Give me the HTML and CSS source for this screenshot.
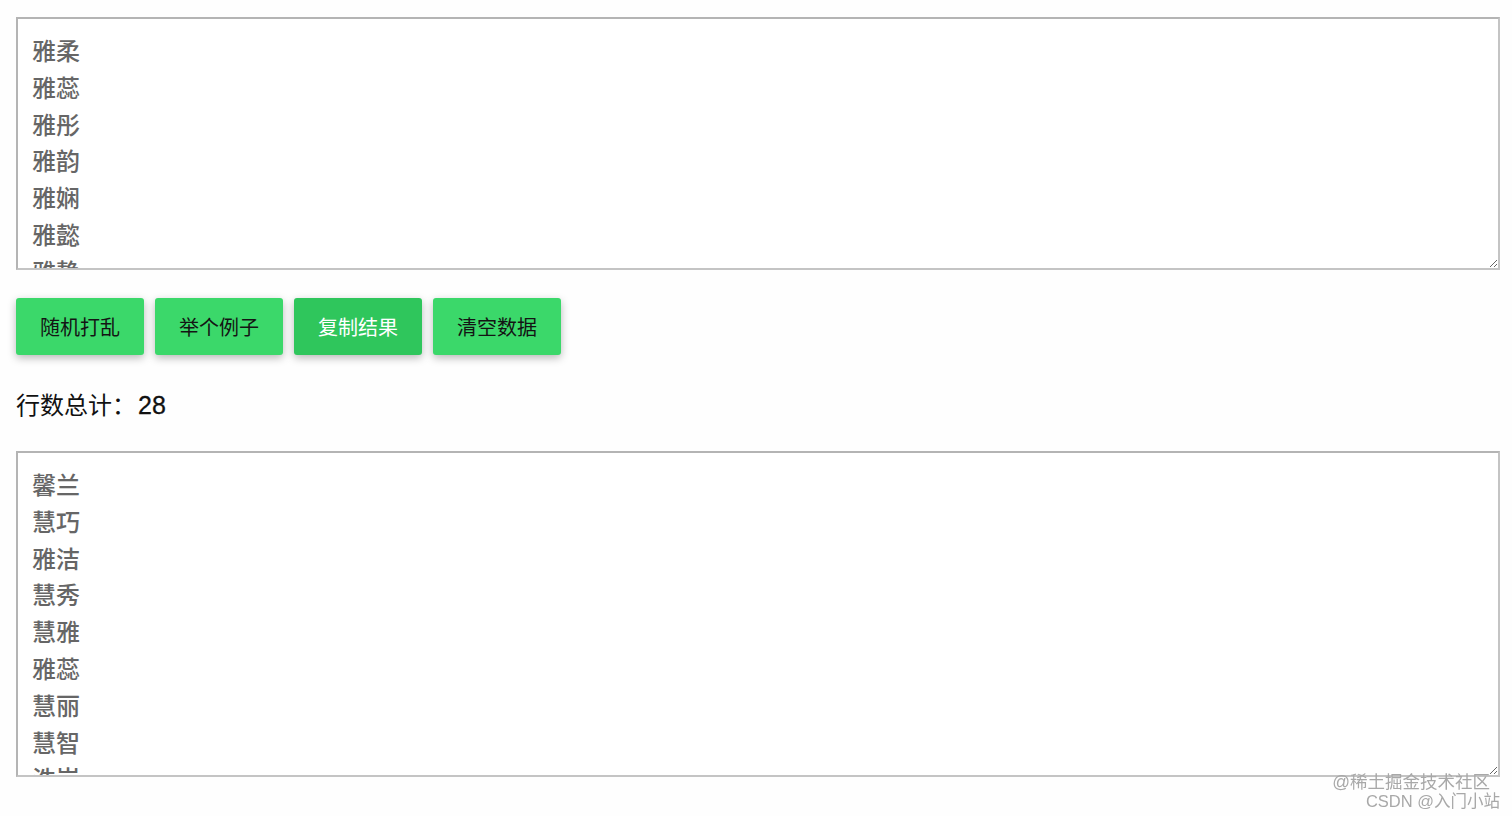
FILE: index.html
```html
<!DOCTYPE html>
<html lang="zh-CN">
<head>
<meta charset="utf-8">
<title>随机打乱</title>
<link rel="stylesheet" href="styles.css">
</head>
<body>
<main class="page">
<textarea class="box box-top">雅柔
雅蕊
雅彤
雅韵
雅娴
雅懿
雅静
雅洁
雅丽
雅琴
雅惠
雅容
雅琪
雅芙</textarea>
<div class="actions">
<button class="btn">随机打乱</button>
<button class="btn">举个例子</button>
<button class="btn btn-active">复制结果</button>
<button class="btn">清空数据</button>
</div>
<p class="count">行数总计：<span class="num">28</span></p>
<textarea class="box box-bottom">馨兰
慧巧
雅洁
慧秀
慧雅
雅蕊
慧丽
慧智
浩岚
雅琴
慧心
雅静
慧颖
雅惠</textarea>
</main>
<div class="watermark">
<span class="wm-line">@稀土掘金技术社区</span>
<span class="wm-line wm-second">CSDN @入门小站</span>
</div>
</body>
</html>
```

FILE: styles.css
```css
html, body {
  margin: 0;
  padding: 0;
  background: #fefefe;
}
body {
  font-family: "Liberation Sans", "Noto Sans CJK SC", sans-serif;
  width: 1512px;
  height: 816px;
  position: relative;
  overflow: hidden;
}
.page {
  display: flex;
  flex-direction: column;
  padding: 17px 12px 0 16px;
}
.box {
  display: block;
  box-sizing: border-box;
  width: 1484px;
  margin: 0;
  border: 2px solid #c4c4c4;
  border-top-color: #b4b4b4;
  border-left-color: #b4b4b4;
  background: #fff;
  padding: 13px 14px;
  font-family: "Noto Sans CJK SC", sans-serif;
  font-size: 24px;
  font-weight: 500;
  line-height: 36.8px;
  color: #666;
  scrollbar-width: none;
  resize: both;
  outline: none;
}
.box::-webkit-scrollbar { width: 0; height: 0; }
.box-top { height: 253px; }
.box-bottom { height: 326px; }
.actions {
  display: flex;
  gap: 11px;
  margin-top: 28px;
}
.btn {
  width: 128px;
  height: 57px;
  border: none;
  border-radius: 3px;
  background: #3bd86a;
  color: #141414;
  font-family: "Noto Sans CJK SC", sans-serif;
  font-size: 20px;
  box-shadow: 0 3px 8px rgba(0, 0, 0, 0.28);
  padding: 0;
}
.btn-active {
  background: #2fc65c;
  color: #fff;
}
.count {
  margin: 33px 0 0;
  height: 32px;
  line-height: 32px;
  font-size: 24px;
  color: #111;
  font-family: "Noto Sans CJK SC", sans-serif;
}
.num {
  font-family: "Liberation Sans", sans-serif;
  font-size: 25px;
  font-weight: 500;
  margin-left: 2px;
  -webkit-text-stroke: 0.3px #111;
}
.count + .box { margin-top: 31px; }
.watermark {
  position: absolute;
  right: 12px;
  top: 773px;
  display: flex;
  flex-direction: column;
  align-items: flex-end;
  font-family: "Liberation Sans", "Noto Sans CJK SC", sans-serif;
  font-size: 16.5px;
  line-height: 19px;
  color: #a8a8a8;
}
.wm-line { display: block; }
.wm-line:first-child { margin-right: 10px; font-size: 17.5px; }
.wm-second { font-size: 16.5px; }
```
